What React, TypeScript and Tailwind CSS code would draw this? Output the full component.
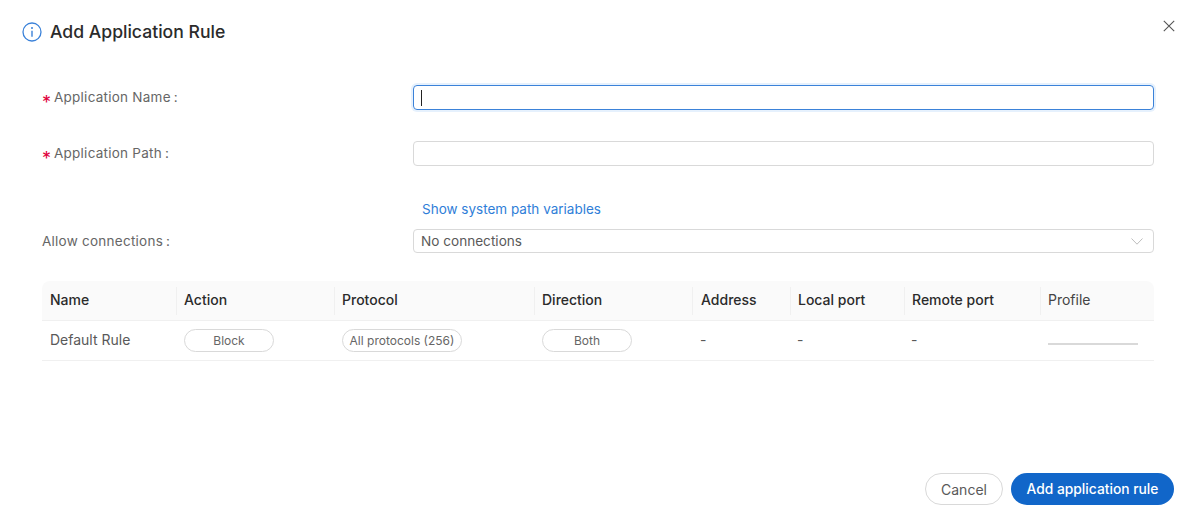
import React from "react";

const cols = "grid grid-cols-[134px_158px_200px_158px_98px_114px_136px_114px]";

function Head({ children, first, className = "" }: { children: React.ReactNode; first?: boolean; className?: string }) {
  return (
    <div className={"flex items-center h-[28px] pb-[2px] text-[14px] font-medium text-[#2b2b2b] " + (first ? "pl-2 " : "pl-[7px] border-l border-[#f0f0f0] ") + className}>
      {children}
    </div>
  );
}

function Pill({ children, w }: { children: React.ReactNode; w: string }) {
  return (
    <div className={"flex items-center justify-center h-[23px] rounded-full border border-[#d9d9d9] text-[12px] text-[#666666] " + w}>
      {children}
    </div>
  );
}

function Label({ children, req, className = "" }: { children: React.ReactNode; req?: boolean; className?: string }) {
  return (
    <div className={"flex items-center text-[13.5px] text-[#666666] tracking-[0.25px] " + className}>
      {req && <span className="w-[12px] h-[13px] text-[#e0003c] text-[18px] leading-[20px] tracking-normal mt-[3px]">*</span>}
      <span>{children}</span>
      <span className="ml-[3px]">:</span>
    </div>
  );
}

export default function App() {
  return (
    <div className="w-[1193px] h-[522px] bg-white flex flex-col font-['Inter',sans-serif] overflow-hidden">
      <div className="flex items-start justify-between pl-[22px] pr-[18px] pt-[21px] h-[85px]">
        <div className="flex items-center gap-[8px] h-[22px]">
          <svg width="20" height="20" viewBox="0 0 20 20" fill="none">
            <circle cx="10" cy="10" r="9" stroke="#3b82d9" strokeWidth="1.3" />
            <circle cx="10" cy="6" r="1" fill="#3b82d9" />
            <path d="M10 8.8v6" stroke="#3b82d9" strokeWidth="1.4" />
          </svg>
          <span className="text-[17.6px] font-medium text-[#2b2b2b]">Add Application Rule</span>
        </div>
        <svg width="12" height="12" viewBox="0 0 12 12" fill="none" className="-mt-px">
          <path d="M.8.8l10.4 10.4M11.2.8L.8 11.2" stroke="#555555" strokeWidth="1.1" />
        </svg>
      </div>

      <div className="pl-[42px] pr-[39px] flex flex-col">
        <div className="grid grid-cols-[371px_741px] h-[25px] items-center">
          <Label req>Application Name</Label>
          <div className="h-[25px] rounded-[4px] border border-[#3b82d9] ring-2 ring-[#e6f1fd] flex items-center pl-[7px]">
            <div className="w-px h-[16px] bg-[#222222]" />
          </div>
        </div>
        <div className="grid grid-cols-[371px_741px] h-[25px] items-center mt-[31px]">
          <Label req>Application Path</Label>
          <div className="h-[25px] rounded-[4px] border border-[#d9d9d9]" />
        </div>
        <div className="grid grid-cols-[371px_741px] h-[18px] items-center mt-[33px]">
          <div />
          <span className="pl-[9px] text-[13.5px] text-[#2f7ed8]">Show system path variables</span>
        </div>
        <div className="grid grid-cols-[371px_741px] h-[24px] items-center mt-[12px]">
          <Label>Allow connections</Label>
          <div className="h-[24px] rounded-[4px] border border-[#d9d9d9] flex items-center justify-between pl-[7px] pr-[10px] text-[13.6px] text-[#595959]">
            <span className="pt-px">No connections</span>
            <svg width="12" height="7" viewBox="0 0 12 7" fill="none">
              <path d="M.5.5L6 6.2 11.5.5" stroke="#bdbdbd" strokeWidth="1" />
            </svg>
          </div>
        </div>

        <div className="mt-[28px]">
          <div className={cols + " h-[40px] items-center bg-[#fafafa] rounded-t-[8px] border-b border-[#f0f0f0]"}>
            <Head first>Name</Head>
            <Head>Action</Head>
            <Head>Protocol</Head>
            <Head>Direction</Head>
            <Head className="pl-[8px]">Address</Head>
            <Head>Local port</Head>
            <Head>Remote port</Head>
            <Head className="font-normal text-[#444444]">Profile</Head>
          </div>
          <div className={cols + " h-[40px] items-center border-b border-[#f0f0f0] text-[14px] text-[#595959]"}>
            <div className="px-2 pb-[2px]">Default Rule</div>
            <div className="px-2"><Pill w="w-[90px]">Block</Pill></div>
            <div className="px-2"><Pill w="w-[120px]">All protocols (256)</Pill></div>
            <div className="px-2"><Pill w="w-[90px]">Both</Pill></div>
            <div className="pl-[8px] pb-[2px]">-</div>
            <div className="pl-[7px] pb-[2px]">-</div>
            <div className="pl-[7px] pb-[2px]">-</div>
            <div className="px-2 pt-[6px]"><div className="w-[90px] h-[2px] bg-[#d9d9d9]" /></div>
          </div>
        </div>
      </div>

      <div className="mt-auto pb-[17px] pr-[19px] flex justify-end gap-[8px]">
        <button className="w-[78px] h-[32px] pt-px rounded-full border border-[#d9d9d9] bg-white text-[14px] text-[#595959]">Cancel</button>
        <button className="w-[163px] h-[32px] pt-px rounded-full bg-[#1166c9] text-[13.8px] font-medium text-white">Add application rule</button>
      </div>
    </div>
  );
}
